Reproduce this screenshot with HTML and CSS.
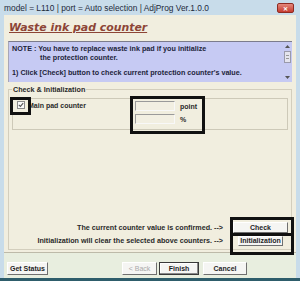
FILE: index.html
```html
<!DOCTYPE html>
<html>
<head>
<meta charset="utf-8">
<link rel="stylesheet" href="styles.css">
</head>
<body>
<div class="window">
  <div class="titlebar">
    <span class="title">model = L110 | port = Auto selection | AdjProg Ver.1.0.0</span>
    <span class="close">&#x2715;</span>
  </div>
  <div class="client">
    <h1 class="heading">Waste ink pad counter</h1>
    <div class="note">
      <div class="note-text">
        <div>NOTE : You have to replace waste ink pad if you initialize</div>
        <div class="indent">the protection counter.</div>
        <div class="gap">1) Click [Check] button to check current protection counter's value.</div>
      </div>
      <div class="scroll">
        <svg class="arrow" width="5" height="3" viewBox="0 0 5 3"><path d="M0 3 L2.5 0 L5 3 Z" fill="#555"/></svg>
        <div class="thumb"><span></span></div>
        <svg class="arrow arrow-down" width="5" height="3" viewBox="0 0 5 3"><path d="M0 0 L2.5 3 L5 0 Z" fill="#555"/></svg>
      </div>
    </div>
    <div class="group">
      <div class="group-head"><span class="group-label">Check &amp; Initialization</span></div>
      <div class="group-body">
        <div class="counters">
          <div class="chk">
            <span class="box"><svg width="6" height="6" viewBox="0 0 6 6"><path d="M0.8 2.8 L2.4 4.4 L5.2 1.2" fill="none" stroke="#555" stroke-width="1.1"/></svg></span>
            <span class="chk-text">Main pad counter</span>
          </div>
          <div class="fields">
            <div class="field-row"><span class="input"></span><span class="unit">point</span></div>
            <div class="field-row"><span class="input"></span><span class="unit">%</span></div>
          </div>
        </div>
        <div class="actions">
          <span class="action-text">The current counter value is confirmed. --&gt;</span>
          <span class="btn btn-check">Check</span>
          <span class="action-text">Initialization will clear the selected above counters. --&gt;</span>
          <span class="btn btn-init">Initialization</span>
        </div>
      </div>
    </div>
    <div class="footer">
      <span class="btn btn-status">Get Status</span>
      <span class="btn btn-back">&lt; Back</span>
      <span class="btn btn-finish">Finish</span>
      <span class="btn btn-cancel">Cancel</span>
    </div>
  </div>
  <div class="edge"></div>
</div>
<div class="mark mark-check"></div>
<div class="mark mark-fields"></div>
<div class="mark mark-btn1"></div>
<div class="mark mark-btn2"></div>
</body>
</html>
```
FILE: styles.css
```css
* { box-sizing: border-box; }
html, body { margin: 0; padding: 0; }
body {
  width: 300px;
  height: 281px;
  overflow: hidden;
  background: #c8dcea;
  font-family: "Liberation Sans", Arial, sans-serif;
  position: relative;
}
.window { display: flex; flex-direction: column; height: 281px; }
.titlebar {
  height: 15px;
  display: flex;
  align-items: center;
  justify-content: space-between;
  padding: 0 6px 0 4px;
  font-size: 8.4px;
  color: #1e2b3b;
}
.close {
  width: 17px;
  height: 10px;
  margin-top: 1px;
  background: linear-gradient(#e4887c, #c63b2f);
  border: 1px solid #8e2a22;
  border-radius: 2px;
  color: #fff;
  font-size: 6px;
  font-weight: bold;
  display: flex;
  align-items: center;
  justify-content: center;
}
.client {
  flex: 1;
  margin: 0 4px;
  background: #f1eedf;
  display: flex;
  flex-direction: column;
}
.edge { height: 3px; background: #2e5d6b; }
.heading {
  margin: 6px 0 7px 5px;
  font-family: "DejaVu Sans", Verdana, sans-serif;
  font-weight: bold;
  font-style: italic;
  font-size: 10.9px;
  line-height: 13px;
  color: #8d4536;
  text-decoration: underline;
  text-decoration-thickness: 1px;
  text-underline-offset: 1px;
}
.note {
  margin: 0 4px;
  height: 41px;
  display: flex;
  background: #c6caf3;
  border-top: 1px solid #7c7c8c;
  border-left: 1px solid #a6a6b8;
}
.note-text {
  flex: 1;
  padding: 2px 0 0 3px;
  font-size: 7.2px;
  font-weight: bold;
  line-height: 9px;
  color: #1d1f3a;
  white-space: nowrap;
}
.indent { padding-left: 28px; }
.gap { margin-top: 6px; }
.scroll {
  width: 9px;
  display: flex;
  flex-direction: column;
  align-items: center;
  padding: 3px 0 3px;
}
.scroll .arrow { flex: none; }
.thumb {
  width: 7px;
  height: 12px;
  margin-top: 3px;
  border: 1px solid #9a9aaa;
  background: #e4e4ee;
  display: flex;
  align-items: center;
  justify-content: center;
}
.thumb span { width: 3px; height: 4px; border-top: 1px solid #999; border-bottom: 1px solid #999; }
.arrow-down { margin-top: auto; }
.group {
  margin: 3px 4px 0;
  height: 165px;
  display: flex;
  flex-direction: column;
}
.group-head {
  height: 9px;
  display: flex;
  align-items: flex-start;
}
.group-head::before,
.group-head::after {
  content: "";
  height: 5px;
  margin-top: 4px;
  border-top: 1px solid #d3cebd;
}
.group-head::before { width: 3px; border-left: 1px solid #d3cebd; }
.group-head::after { flex: 1; border-right: 1px solid #d3cebd; }
.group-label {
  padding: 0 1px;
  font-size: 7.2px;
  font-weight: bold;
  line-height: 9px;
  color: #2a2a2a;
}
.group-body {
  flex: 1;
  border: 1px solid #d3cebd;
  border-top: none;
  padding: 0 3px 2px;
  display: flex;
  flex-direction: column;
}
.counters {
  margin-top: 4px;
  height: 32px;
  border: 1px solid #cdc9b8;
  display: flex;
  padding: 2px 0 0 4px;
}
.chk { width: 118px; display: flex; align-items: flex-start; gap: 3px; }
.box {
  width: 8px;
  height: 8px;
  border: 1px solid #8a8a8a;
  background: #fafafa;
  display: flex;
  align-items: center;
  justify-content: center;
}
.chk-text { font-size: 7px; font-weight: bold; line-height: 8px; color: #2a2a2a; margin-top: 1px; white-space: nowrap; }
.fields { display: flex; flex-direction: column; gap: 3px; }
.field-row { display: flex; align-items: center; gap: 5px; }
.input {
  width: 40px;
  height: 10px;
  border-top: 1px solid #9a9a9a;
  border-left: 1px solid #9a9a9a;
  border-right: 1px solid #f8f8f8;
  border-bottom: 1px solid #f8f8f8;
  background: #f2efe2;
}
.unit { font-size: 7px; font-weight: bold; color: #2a2a2a; }
.actions {
  margin-top: auto;
  display: grid;
  grid-template-columns: 1fr 55px;
  grid-auto-rows: 13px;
  column-gap: 10px;
  align-items: center;
}
.action-text { text-align: right; font-size: 7.2px; font-weight: bold; color: #2a2a2a; white-space: nowrap; }
.btn {
  height: 13px;
  font-size: 7px;
  font-weight: bold;
  background: #f5f5f3;
  border: 1px solid;
  border-color: #ffffff #6f6f6f #6f6f6f #ffffff;
  display: flex;
  align-items: center;
  justify-content: center;
  color: #1f1f1f;
  white-space: nowrap;
}
.btn-check { height: 11px; width: 55px; }
.btn-init { height: 10px; width: 45px; justify-self: center; }
.footer {
  margin-top: 2px;
  flex: 1;
  background: #e8eedf;
  border-top: 1px solid #bdbaa9;
  padding: 9px 0 0 3px;
  display: flex;
  align-items: flex-start;
}
.btn-status { width: 41px; }
.btn-back { width: 35px; margin-left: 74px; color: #a8a8a8; font-weight: normal; }
.btn-finish { width: 40px; margin-left: 2px; border: 1px solid #3a3a3a; box-shadow: inset -1px -1px 0 #8a8a8a, inset 1px 1px 0 #fff; }
.btn-cancel { width: 44px; margin-left: 4px; }
.mark { position: absolute; border: 3px solid #111; }
.mark-check { left: 10px; top: 97px; width: 21px; height: 18px; }
.mark-fields { left: 130px; top: 96px; width: 75px; height: 38px; }
.mark-btn1 { left: 230px; top: 217px; width: 64px; height: 19px; }
.mark-btn2 { left: 230px; top: 233px; width: 64px; height: 22px; }
```
